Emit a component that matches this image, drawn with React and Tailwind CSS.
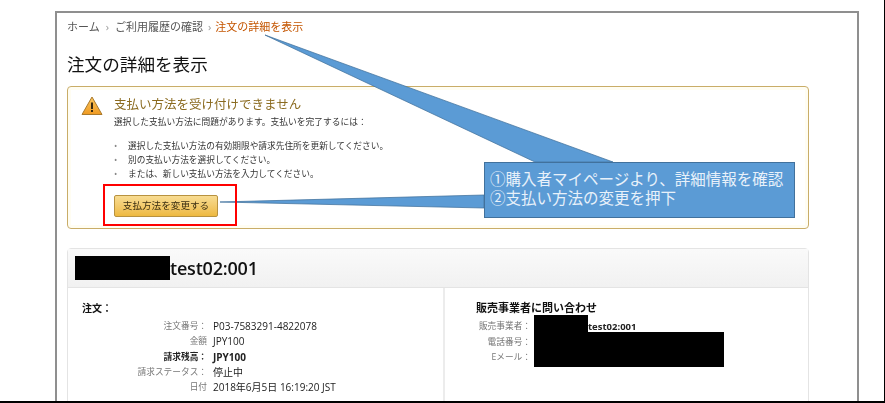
const FONT = "font-['Open_Sans','Noto_Sans_CJK_JP',sans-serif]";

const orderRows = [
  { label: "注文番号：", value: "P03-7583291-4822078" },
  { label: "金額", value: "JPY100" },
  { label: "請求残高：", value: "JPY100", bold: true },
  { label: "請求ステータス：", value: "停止中" },
  { label: "日付", value: "2018年6月5日 16:19:20 JST" },
];

const sellerRows = [
  { label: "販売事業者：", value: "test02:001", bold: true },
  { label: "電話番号：", value: "" },
  { label: "Eメール：", value: "" },
];

const tips = [
  "選択した支払い方法の有効期限や請求先住所を更新してください。",
  "別の支払い方法を選択してください。",
  "または、新しい支払い方法を入力してください。",
];

const WarningIcon = () => (
  <svg width="22" height="20" viewBox="0 0 22 20" className="shrink-0 mt-[-1px]">
    <defs>
      <linearGradient id="warn" x1="0" y1="0" x2="0" y2="1">
        <stop offset="0" stopColor="#fbc760" />
        <stop offset="1" stopColor="#ef9a22" />
      </linearGradient>
    </defs>
    <path d="M11 1 L21 18.5 H1 Z" fill="url(#warn)" stroke="#a9792c" strokeWidth="1" strokeLinejoin="round" />
    <rect x="10" y="6.5" width="2" height="6.5" fill="#3a2a10" />
    <rect x="10" y="14" width="2" height="2" fill="#3a2a10" />
  </svg>
);

export default function App() {
  return (
    <div className={`relative w-[885px] h-[403px] overflow-hidden bg-white border-r border-b-2 border-black ${FONT}`}>
      <div className="ml-[55px] mt-[11px] w-[804px] h-[400px] border-x-2 border-t-2 border-[#8f8f8f] pl-[10px] pr-[48px] blur-[0.35px]">
        <div className="mt-[6px] flex items-center h-[16px] text-[11px] leading-[16px] text-[#555]">
          <span>ホーム</span>
          <span className="mx-[6px] text-[#999]">›</span>
          <span>ご利用履歴の確認</span>
          <span className="ml-[5px] mr-[4px] text-[#999]">›</span>
          <span className="text-[#c45500]">注文の詳細を表示</span>
        </div>

        <h1 className="mt-[17px] h-[24px] text-[17.6px] leading-[24px] font-normal text-[#111]">注文の詳細を表示</h1>

        <div className="mt-[10px] h-[143px] rounded-[4px] border border-[#c9ad68] shadow-[inset_0_0_0_3px_#fffdf2] pl-[13px] pt-[10px] flex gap-[11px]">
          <WarningIcon />
          <div className="text-[#333]">
            <div className="h-[16px] text-[12.5px] leading-[16px] text-[#8a6a1f]">支払い方法を受け付けできません</div>
            <div className="mt-[3px] h-[12px] text-[8.75px] leading-[12px]">選択した支払い方法に問題があります。支払いを完了するには：</div>
            <ul className="mt-[11px] text-[8.7px] leading-[14px]">
              {tips.map((tip) => (
                <li key={tip} className="flex h-[14px]">
                  <span className="w-[14px] text-[#888]">•</span>
                  <span>{tip}</span>
                </li>
              ))}
            </ul>
            <button className="mt-[14px] w-[104px] h-[22px] rounded-[2px] border border-[#b8923f] bg-gradient-to-b from-[#f8dc91] to-[#eeb93f] text-[9.6px] text-[#3b2f12] text-center">
              支払方法を変更する
            </button>
          </div>
        </div>

        <div className="mt-[19px] h-[200px] rounded-[4px] border border-[#e4e4e4]">
          <div className="h-[39px] flex items-center pl-[7px] border-b border-[#e4e4e4] bg-gradient-to-b from-[#fafafa] to-[#f1f1f1]">
            <span className="w-[95px] h-[24px] bg-black" />
            <span className="text-[18px] font-semibold text-[#111] tracking-[-0.2px]">test02:001</span>
          </div>
          <div className="flex">
            <div className="w-[377px] h-[160px] border-r-2 border-[#ececec] pl-[14px] pt-[12px]">
              <div className="h-[16px] text-[10px] leading-[16px] font-bold text-[#111]">注文：</div>
              <div className="mt-[3px] text-[10px] leading-[15.25px]">
                {orderRows.map((row) => (
                  <div key={row.label} className="flex h-[15.25px]">
                    <span className={`w-[125px] text-right text-[8.7px] ${row.bold ? "font-bold text-[#222]" : "text-[#777]"}`}>{row.label}</span>
                    <span className={`ml-[6px] text-[#222] ${row.bold ? "font-bold" : ""}`}>{row.value}</span>
                  </div>
                ))}
              </div>
            </div>
            <div className="relative pl-[31px] pt-[12px]">
              <div className="h-[16px] text-[11px] leading-[16px] font-bold text-[#111]">販売事業者に問い合わせ</div>
              <div className="mt-[3px] text-[9.5px] leading-[15.5px]">
                {sellerRows.map((row) => (
                  <div key={row.label} className="flex h-[15.5px]">
                    <span className="w-[55px] text-right text-[8.7px] text-[#777]">{row.label}</span>
                    <span className="ml-[57px] font-bold text-[#222]">{row.value}</span>
                  </div>
                ))}
              </div>
              <div className="absolute left-[89px] top-[27px] w-[54px] h-[18px] bg-black" />
              <div className="absolute left-[89px] top-[44px] w-[190px] h-[35px] bg-black" />
            </div>
          </div>
        </div>
      </div>

      {/* annotations drawn over the page */}
      <svg width="885" height="403" className="absolute left-0 top-0 pointer-events-none">
        <polygon points="265,35 535,162 613,162" fill="#5b9bd5" stroke="#41719c" strokeWidth="0.75" />
        <polygon points="220,202 484,195 484,208" fill="#5b9bd5" stroke="#41719c" strokeWidth="0.75" />
      </svg>
      <div className="absolute left-[103px] top-[184px] w-[134px] h-[42px] border-2 border-[#ff0000]" />
      <div className="absolute left-[484px] top-[162px] w-[311px] h-[56px] bg-[#5b9bd5] border border-[#41719c] pl-[5px] pt-[7px] text-[15.5px] leading-[19px] text-[#e8f1fa]">
        <div>①購入者マイページより、詳細情報を確認</div>
        <div>②支払い方法の変更を押下</div>
      </div>
    </div>
  );
}
